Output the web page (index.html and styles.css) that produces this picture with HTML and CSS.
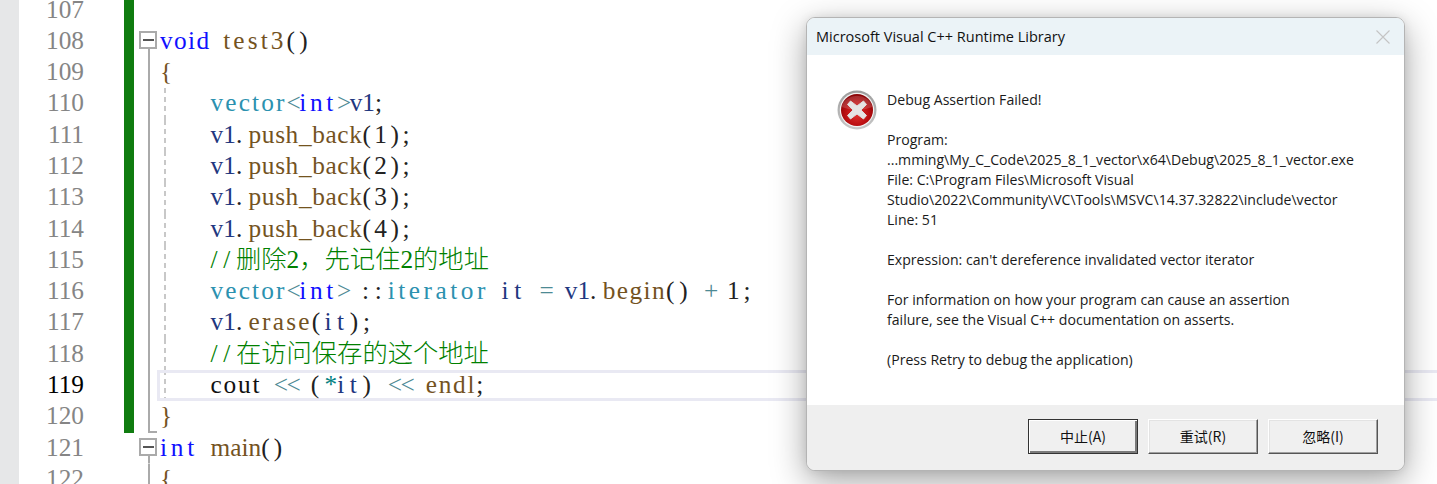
FILE: index.html
```html
<!DOCTYPE html>
<html lang="zh">
<head>
<meta charset="utf-8">
<title>Debug Assertion Failed</title>
<link rel="stylesheet" href="styles.css">
</head>
<body>
<main class="editor">
  <div class="strip"></div>
  <div class="lines">
    <div class="row"><span class="num">107</span><span class="bar"></span><span class="fold"></span><span class="code"></span></div>
    <div class="row"><span class="num">108</span><span class="bar"></span><span class="fold open"><i class="box"></i></span><span class="code"><b class="kw">void</b> <b class="fn">test3</b>()</span></div>
    <div class="row"><span class="num">109</span><span class="bar"></span><span class="fold mid"></span><span class="code"><b class="fn">{</b></span></div>
    <div class="row"><span class="num">110</span><span class="bar"></span><span class="fold mid"></span><span class="code guide">    <b class="ty">vector</b><b class="op">&lt;</b><b class="kw">int</b><b class="op">&gt;</b><b class="var">v1</b>;</span></div>
    <div class="row"><span class="num">111</span><span class="bar"></span><span class="fold mid"></span><span class="code guide">    <b class="var">v1</b>.<b class="fn">push_back</b>(1);</span></div>
    <div class="row"><span class="num">112</span><span class="bar"></span><span class="fold mid"></span><span class="code guide">    <b class="var">v1</b>.<b class="fn">push_back</b>(2);</span></div>
    <div class="row"><span class="num">113</span><span class="bar"></span><span class="fold mid"></span><span class="code guide">    <b class="var">v1</b>.<b class="fn">push_back</b>(3);</span></div>
    <div class="row"><span class="num">114</span><span class="bar"></span><span class="fold mid"></span><span class="code guide">    <b class="var">v1</b>.<b class="fn">push_back</b>(4);</span></div>
    <div class="row"><span class="num">115</span><span class="bar"></span><span class="fold mid"></span><span class="code guide">    <b class="cm">//<span class="cjk">删除</span>2<span class="cjk">，先记住</span>2<span class="cjk">的地址</span></b></span></div>
    <div class="row"><span class="num">116</span><span class="bar"></span><span class="fold mid"></span><span class="code guide">    <b class="ty">vector</b><b class="op">&lt;</b><b class="kw">int</b><b class="op">&gt;</b> ::<b class="ty">iterator</b> <b class="var">it</b> <b class="op">=</b> <b class="var">v1</b>.<b class="fn">begin</b>() <b class="op">+</b> 1;</span></div>
    <div class="row"><span class="num">117</span><span class="bar"></span><span class="fold mid"></span><span class="code guide">    <b class="var">v1</b>.<b class="fn">erase</b>(<b class="var">it</b>);</span></div>
    <div class="row"><span class="num">118</span><span class="bar"></span><span class="fold mid"></span><span class="code guide">    <b class="cm">//<span class="cjk">在访问保存的这个地址</span></b></span></div>
    <div class="row"><span class="num now">119</span><span class="bar"></span><span class="fold mid"></span><span class="code guide current">    <b class="out">cout</b> <b class="op">&lt;&lt;</b> (<b class="tl">*</b><b class="var">it</b>) <b class="op">&lt;&lt;</b> <b class="fn">endl</b>;</span></div>
    <div class="row"><span class="num">120</span><span class="bar"></span><span class="fold end"></span><span class="code"><b class="fn">}</b></span></div>
    <div class="row"><span class="num">121</span><span class="bar off"></span><span class="fold open"><i class="box"></i></span><span class="code"><b class="kw">int</b> <b class="fn">main</b>()</span></div>
    <div class="row"><span class="num">122</span><span class="bar off"></span><span class="fold mid"></span><span class="code"><b class="fn">{</b></span></div>
  </div>
</main>

<section class="dialog">
  <header class="title">
    <span>Microsoft Visual C++ Runtime Library</span>
    <svg class="close" width="14" height="14" viewBox="0 0 14 14"><path d="M.5.5l13 13M13.5.5l-13 13" stroke="#c4c4c4" stroke-width="1.1" fill="none"/></svg>
  </header>
  <div class="content">
    <svg class="icon" width="40" height="40" viewBox="0 0 40 40">
      <defs>
        <radialGradient id="red" cx="50%" cy="62%" r="58%">
          <stop offset="0" stop-color="#e2332f"/>
          <stop offset=".65" stop-color="#b90d10"/>
          <stop offset="1" stop-color="#8c0508"/>
        </radialGradient>
        <linearGradient id="ring" x1="0" y1="0" x2="0" y2="1">
          <stop offset="0" stop-color="#9c9c9c"/>
          <stop offset="1" stop-color="#c8c8c8"/>
        </linearGradient>
      </defs>
      <circle cx="20" cy="20" r="19.5" fill="url(#ring)"/>
      <circle cx="20" cy="20" r="17.2" fill="#f1f1f1"/>
      <circle cx="20" cy="20" r="16" fill="url(#red)"/>
      <path d="M4.500 17a16 15 0 0 1 31 0q-15 6-31 0z" fill="#fff" opacity=".16"/>
      <path d="M13.500 11l6.500 5 6.500-5 3 3.500-5.500 5.500 5.500 5.500-3 3.500-6.500-5-6.500 5-3-3.500 5.500-5.500-5.500-5.500z" fill="#e6e3e3" stroke="#ddd" stroke-width="1" stroke-linejoin="round"/>
    </svg>
    <div class="message">
      <p>Debug Assertion Failed!</p>
      <p>Program:<br>...mming\My_C_Code\2025_8_1_vector\x64\Debug\2025_8_1_vector.exe<br>File: C:\Program Files\Microsoft Visual<br>Studio\2022\Community\VC\Tools\MSVC\14.37.32822\include\vector<br>Line: 51</p>
      <p>Expression: can't dereference invalidated vector iterator</p>
      <p>For information on how your program can cause an assertion<br>failure, see the Visual C++ documentation on asserts.</p>
      <p>(Press Retry to debug the application)</p>
    </div>
  </div>
  <footer class="actions">
    <button class="btn primary">中止(A)</button>
    <button class="btn">重试(R)</button>
    <button class="btn">忽略(I)</button>
  </footer>
</section>
<script src="code.js"></script>
</body>
</html>
```
FILE: styles.css
```css
* { box-sizing: border-box; }
html, body { margin: 0; height: 100%; overflow: hidden; background: #fff; }
body { position: relative; }

.editor { display: flex; height: 484px; overflow: hidden; }
.strip { width: 19px; flex: none; background: #e6e7e8; }
.lines { flex: 1; margin-top: -5.5px; font: 25.3px/29.3px "Liberation Serif", serif; }

.row { display: flex; height: 31.3px; }
.num { width: 65px; flex: none; text-align: right; color: #858585; }
.num.now { color: #000; }
.bar { width: 10px; flex: none; margin-left: 40px; background: #107c10; }
.bar.off { background: none; }

.fold { width: 23px; flex: none; display: flex; align-items: center; padding-left: 5px; background-repeat: no-repeat; }
.fold.mid { background-image: linear-gradient(#aaa, #aaa); background-size: 2px 100%; background-position: 14px 0; }
.fold.open { background-image: linear-gradient(#aaa, #aaa); background-size: 2px 50%; background-position: 14px 100%; }
.fold.end { background-image: linear-gradient(#aaa, #aaa), linear-gradient(#aaa, #aaa); background-size: 2px 100%, 9px 2px; background-position: 14px 0, 14px 100%; }
.box { display: flex; align-items: center; justify-content: center; width: 18px; height: 18px; border: 2px solid #aaa; background: #fff; margin-top: -2px; }
.box::before { content: ""; width: 11px; height: 2px; background: #555; }

.code { flex: 1; padding-left: 3px; white-space: pre; color: #222; }
.code.guide { background-image: repeating-linear-gradient(#c8c8c8 0 5px, transparent 5px 9px); background-size: 2px 100%; background-position: 7px 0; background-repeat: no-repeat; background-origin: border-box; }
.code.current { border: 3px solid #e9e9f3; border-right: 0; padding-left: 0; line-height: 23.3px; }

b { font-weight: normal; }
.kw { color: #1010ff; }
.fn { color: #74531f; }
.ty { color: #2b91af; }
.var { color: #1f377f; }
.op { color: #4d8a94; }
.tl { color: #008080; }
.cm { color: #008000; }
.out { color: #111; }
.cjk { font-family: "Noto Sans CJK SC", sans-serif; font-size: 25.3px; font-weight: 300; letter-spacing: 0; line-height: 1; }

.dialog { position: absolute; left: 806px; top: 17px; width: 599px; height: 454px; display: flex; flex-direction: column; background: #fff; border: 1px solid #b4b4b4; border-radius: 9px; overflow: hidden; font-family: "Open Sans", sans-serif; color: #1a1a1a; box-shadow: 0 10px 34px rgba(0,0,0,.36), 0 0 10px rgba(0,0,0,.08); }
.title { height: 37px; flex: none; display: flex; align-items: center; justify-content: space-between; padding: 0 14px 0 9px; background: #ebf3f7; font-size: 14.5px; color: #111; }
.content { flex: 1; display: flex; gap: 10px; padding: 35px 0 0 30px; }
.icon { flex: none; }
.message { font-size: 14.1px; line-height: 20px; white-space: nowrap; }
.message p { margin: 0 0 20px; }
.actions { height: 65px; flex: none; display: flex; justify-content: flex-end; align-items: center; gap: 10px; padding: 0 26px 2px 0; background: #efefef; }
.btn { width: 110px; height: 35px; padding: 0 0 2px; background: #f0f0f0; border: 1px solid; border-color: #fff #555 #555 #fff; box-shadow: inset -1px -1px 0 #a0a0a0, inset 1px 1px 0 #e3e3e3; font: 14px "Noto Sans CJK SC", sans-serif; color: #111; }
.btn.primary { border-color: #333; box-shadow: inset 1px 1px 0 #fff, inset -2px -2px 0 #7a7a7a; }
```
FILE: code.js
```js
// The code is set in a proportional serif; space each run out to the
// editor's fixed 12.65px character cell, measured from the rendered width.
var CELL = 12.65;
document.querySelectorAll('.code').forEach(function (line) {
  var walker = document.createTreeWalker(line, NodeFilter.SHOW_TEXT);
  var nodes = [];
  while (walker.nextNode()) nodes.push(walker.currentNode);
  nodes.forEach(function (node) {
    if (node.parentNode.className === 'cjk') return;
    var run = document.createElement('span');
    node.parentNode.replaceChild(run, node);
    run.appendChild(node);
    var count = node.data.length;
    var spare = count * CELL - run.getBoundingClientRect().width;
    run.style.letterSpacing = (spare / count) + 'px';
  });
});
```
